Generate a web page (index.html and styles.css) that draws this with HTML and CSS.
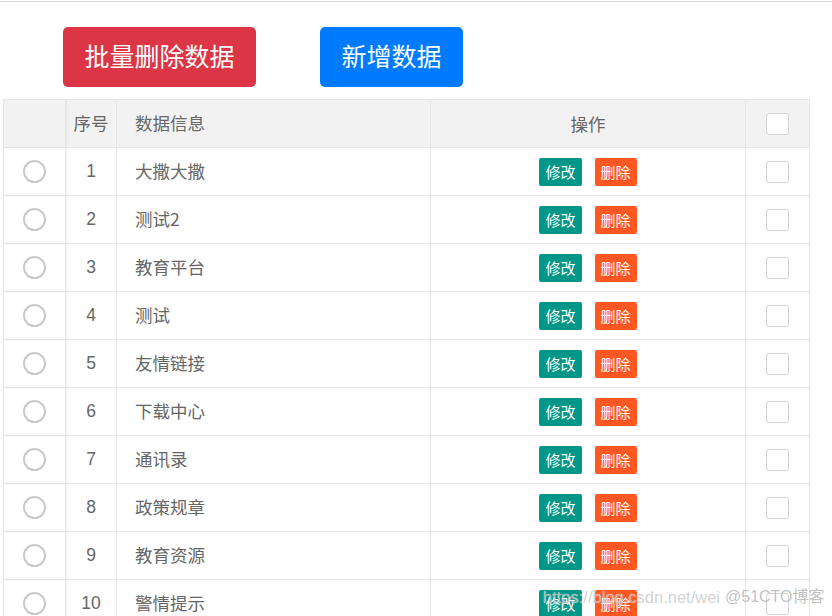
FILE: index.html
```html
<!DOCTYPE html>
<html lang="zh-CN">
<head>
<meta charset="utf-8">
<title>数据列表</title>
<link rel="stylesheet" href="styles.css">
</head>
<body>
<div class="topline"></div>
<div class="toolbar">
  <button class="btn btn-danger">批量删除数据</button>
  <button class="btn btn-primary">新增数据</button>
</div>
<div class="grid">
  <div class="cell head c1"></div>
  <div class="cell head c2 center">序号</div>
  <div class="cell head c3">数据信息</div>
  <div class="cell head c4 center">操作</div>
  <div class="cell head c5 center"><span class="check"></span></div>

  <div class="cell c1 center"><span class="radio"></span></div><div class="cell c2 center">1</div><div class="cell c3">大撒大撒</div><div class="cell c4 center"><span class="sbtn edit">修改</span><span class="sbtn del">删除</span></div><div class="cell c5 center"><span class="check"></span></div>
  <div class="cell c1 center"><span class="radio"></span></div><div class="cell c2 center">2</div><div class="cell c3">测试2</div><div class="cell c4 center"><span class="sbtn edit">修改</span><span class="sbtn del">删除</span></div><div class="cell c5 center"><span class="check"></span></div>
  <div class="cell c1 center"><span class="radio"></span></div><div class="cell c2 center">3</div><div class="cell c3">教育平台</div><div class="cell c4 center"><span class="sbtn edit">修改</span><span class="sbtn del">删除</span></div><div class="cell c5 center"><span class="check"></span></div>
  <div class="cell c1 center"><span class="radio"></span></div><div class="cell c2 center">4</div><div class="cell c3">测试</div><div class="cell c4 center"><span class="sbtn edit">修改</span><span class="sbtn del">删除</span></div><div class="cell c5 center"><span class="check"></span></div>
  <div class="cell c1 center"><span class="radio"></span></div><div class="cell c2 center">5</div><div class="cell c3">友情链接</div><div class="cell c4 center"><span class="sbtn edit">修改</span><span class="sbtn del">删除</span></div><div class="cell c5 center"><span class="check"></span></div>
  <div class="cell c1 center"><span class="radio"></span></div><div class="cell c2 center">6</div><div class="cell c3">下载中心</div><div class="cell c4 center"><span class="sbtn edit">修改</span><span class="sbtn del">删除</span></div><div class="cell c5 center"><span class="check"></span></div>
  <div class="cell c1 center"><span class="radio"></span></div><div class="cell c2 center">7</div><div class="cell c3">通讯录</div><div class="cell c4 center"><span class="sbtn edit">修改</span><span class="sbtn del">删除</span></div><div class="cell c5 center"><span class="check"></span></div>
  <div class="cell c1 center"><span class="radio"></span></div><div class="cell c2 center">8</div><div class="cell c3">政策规章</div><div class="cell c4 center"><span class="sbtn edit">修改</span><span class="sbtn del">删除</span></div><div class="cell c5 center"><span class="check"></span></div>
  <div class="cell c1 center"><span class="radio"></span></div><div class="cell c2 center">9</div><div class="cell c3">教育资源</div><div class="cell c4 center"><span class="sbtn edit">修改</span><span class="sbtn del">删除</span></div><div class="cell c5 center"><span class="check"></span></div>
  <div class="cell c1 center"><span class="radio"></span></div><div class="cell c2 center">10</div><div class="cell c3">警情提示</div><div class="cell c4 center"><span class="sbtn edit">修改</span><span class="sbtn del">删除</span></div><div class="cell c5 center"><span class="check"></span></div>
</div>
<div class="watermark wm-url">https://blog.csdn.net/wei</div>
<div class="watermark wm-site">@51CTO博客</div>
</body>
</html>
```
FILE: styles.css
```css
html, body {
  margin: 0;
  padding: 0;
  background: #fff;
  overflow: hidden;
  height: 616px;
}
body {
  font-family: "Liberation Sans", "Noto Sans CJK SC", sans-serif;
  color: #666;
  position: relative;
}
.topline {
  height: 1px;
  margin-top: 1px;
  background: #dcdcdc;
}
.toolbar {
  display: flex;
  gap: 64px;
  padding: 25px 0 0 63px;
  height: 60px;
}
.btn {
  font-family: "Noto Sans CJK SC", sans-serif;
  font-size: 25px;
  line-height: 56px;
  height: 60px;
  padding: 0 21.5px 4px;
  border: 0;
  border-radius: 5px;
  color: #fff;
  cursor: pointer;
}
.btn-danger { background: #dc3545; }
.btn-primary { background: #007bff; }

.grid {
  margin: 12px 0 0 3px;
  width: 807px;
  display: grid;
  grid-template-columns: 62px 51px 314px 315px 64px;
  grid-auto-rows: 48px;
  border-left: 1px solid #e6e6e6;
  border-top: 1px solid #e6e6e6;
  box-sizing: border-box;
}
.cell {
  box-sizing: border-box;
  border-right: 1px solid #e6e6e6;
  border-bottom: 1px solid #e6e6e6;
  display: flex;
  align-items: center;
  font-size: 17.5px;
  line-height: 24px;
  padding: 0 18px 2px;
  white-space: nowrap;
  overflow: hidden;
}
.cell.center { justify-content: center; padding: 0 0 2px; }
.head { background: #f2f2f2; }
.c1 { box-shadow: 1px 0 2px rgba(0, 0, 0, 0.06); position: relative; z-index: 1; }
.c1.center { padding: 0; }
.c3 { font-family: "Noto Sans CJK SC", sans-serif; }
.head.c2, .head.c4 { font-family: "Noto Sans CJK SC", sans-serif; }
.c4.center, .c5.center { padding: 0; }

.radio {
  width: 23px;
  height: 23px;
  box-sizing: border-box;
  border: 2px solid #c9c9c9;
  border-radius: 50%;
  background: #fff;
}
.check {
  width: 23px;
  height: 22px;
  box-sizing: border-box;
  border: 1px solid #d2d2d2;
  border-radius: 3px;
  background: #fff;
}
.sbtn {
  font-family: "Noto Sans CJK SC", sans-serif;
  display: inline-block;
  height: 28px;
  line-height: 27px;
  padding: 0 6px;
  font-size: 15px;
  color: #fff;
  border-radius: 2px;
}
.sbtn + .sbtn { margin-left: 13px; }
.edit { background: #009688; }
.del { background: #ff5722; }

.watermark {
  position: absolute;
  top: 586px;
  font-family: "Liberation Sans", "Noto Sans CJK SC", sans-serif;
  font-size: 16.5px;
  line-height: 22px;
  color: rgba(150, 150, 150, 0.45);
  text-shadow: 0 0 1px rgba(255, 255, 255, 0.9);
  white-space: nowrap;
  z-index: 5;
}
.wm-url { left: 543px; }
.wm-site {
  left: 725px;
  font-size: 16px;
  color: rgba(140, 140, 140, 0.55);
}
```
